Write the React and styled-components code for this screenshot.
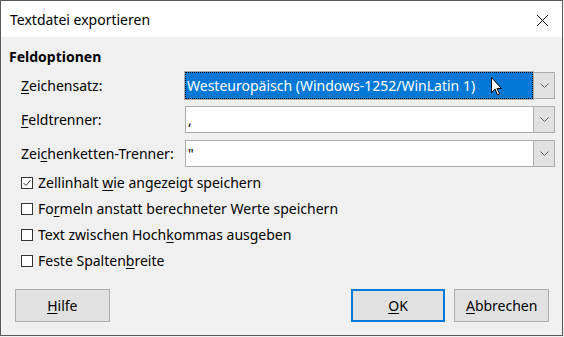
import React from "react";
import styled, { createGlobalStyle } from "styled-components";

const Global = createGlobalStyle`
  html, body { margin: 0; padding: 0; background: #f0f0f0; }
  #root { width: 564px; height: 337px; }
`;

const Window = styled.div`
  box-sizing: border-box;
  width: 563px;
  height: 336px;
  border: 1px solid #5a5a5a;
  background: #f0f0f0;
  display: flex;
  flex-direction: column;
  position: relative;
  font-family: "Noto Sans", sans-serif;
  font-size: 14px;
  line-height: 16px;
  color: #000;
`;

const TitleBar = styled.div`
  height: 36px;
  flex: none;
  background: #fff;
  display: flex;
  align-items: center;
  justify-content: space-between;
  padding: 0 13px 0 9px;
`;

const Title = styled.span`
  margin-top: 2px;
`;

const CloseBtn = styled.span`
  display: flex;
  width: 13px;
  height: 13px;
  margin-top: 2px;
`;

const Body = styled.div`
  flex: 1;
  display: flex;
  flex-direction: column;
  padding: 12px 13px 13px 8px;
`;

const SectionTitle = styled.div`
  font-weight: bold;
`;

const FieldGrid = styled.div`
  display: grid;
  grid-template-columns: 164px 370px;
  grid-auto-rows: 27px;
  row-gap: 7px;
  margin: 7px 0 0 12px;
  align-items: center;
`;

const Label = styled.span``;

const Combo = styled.div`
  display: flex;
  height: 27px;
  box-sizing: border-box;
`;

const Field = styled.div`
  flex: 1;
  box-sizing: border-box;
  border: 1px solid #adadad;
  border-right: none;
  background: #fff;
  display: flex;
  align-items: center;
  padding: 0 2px;
`;

const SelectedText = styled.div`
  flex: 1;
  align-self: stretch;
  box-sizing: border-box;
  background: #0078d7;
  color: #fff;
  border: 1px dotted #000;
  outline: 1px solid #adadad;
  display: flex;
  align-items: center;
  padding: 0 1px;
`;

const DropBtn = styled.div`
  width: 22px;
  flex: none;
  box-sizing: border-box;
  border: 1px solid #adadad;
  background: #e1e1e1;
  display: flex;
  align-items: center;
  justify-content: center;
`;

const CheckList = styled.div`
  display: flex;
  flex-direction: column;
  margin: 3px 0 0 12px;
`;

const CheckRow = styled.label`
  height: 26px;
  display: flex;
  align-items: center;
  gap: 5px;
`;

const Box = styled.span`
  width: 12px;
  height: 12px;
  box-sizing: border-box;
  border: 1px solid #333;
  background: #fff;
  display: flex;
  align-items: center;
  justify-content: center;
  flex: none;
`;

const ButtonRow = styled.div`
  margin-top: auto;
  display: flex;
  align-items: center;
  padding-left: 6px;
`;

const Button = styled.div`
  width: 95px;
  height: 33px;
  box-sizing: border-box;
  background: #e1e1e1;
  border: ${(p) => (p.$default ? "2px solid #0078d7" : "1px solid #adadad")};
  display: flex;
  align-items: center;
  justify-content: center;
  margin-left: ${(p) => p.$ml || 0}px;
`;

const U = styled.span`
  text-decoration: underline;
  text-underline-offset: 2px;
`;

const Cursor = styled.svg`
  position: absolute;
  left: 490px;
  top: 76px;
`;

const Chevron = () => (
  <svg width="9" height="5" viewBox="0 0 9 5">
    <path d="M0.5 0.5 L4.5 4.5 L8.5 0.5" fill="none" stroke="#606060" strokeWidth="1" />
  </svg>
);

export default function App() {
  return (
    <>
      <Global />
      <Window>
        <TitleBar>
          <Title>Textdatei exportieren</Title>
          <CloseBtn>
            <svg width="13" height="13" viewBox="0 0 13 13">
              <path d="M1 1 L12 12 M12 1 L1 12" stroke="#000" strokeWidth="1" />
            </svg>
          </CloseBtn>
        </TitleBar>
        <Body>
          <SectionTitle>Feldoptionen</SectionTitle>
          <FieldGrid>
            <Label><U>Z</U>eichensatz:</Label>
            <Combo>
              <SelectedText>Westeuropäisch (Windows-1252/WinLatin 1)</SelectedText>
              <DropBtn><Chevron /></DropBtn>
            </Combo>
            <Label><U>F</U>eldtrenner:</Label>
            <Combo>
              <Field>,</Field>
              <DropBtn><Chevron /></DropBtn>
            </Combo>
            <Label>Zei<U>c</U>henketten-Trenner:</Label>
            <Combo>
              <Field>"</Field>
              <DropBtn><Chevron /></DropBtn>
            </Combo>
          </FieldGrid>
          <CheckList>
            <CheckRow>
              <Box>
                <svg width="10" height="10" viewBox="0 0 10 10">
                  <path d="M1.5 5 L4 7.5 L8.5 2" fill="none" stroke="#333" strokeWidth="1" />
                </svg>
              </Box>
              <span>Zellinhalt <U>w</U>ie angezeigt speichern</span>
            </CheckRow>
            <CheckRow>
              <Box />
              <span>Fo<U>r</U>meln anstatt berechneter Werte speichern</span>
            </CheckRow>
            <CheckRow>
              <Box />
              <span>Text zwischen Hoch<U>k</U>ommas ausgeben</span>
            </CheckRow>
            <CheckRow>
              <Box />
              <span>Feste Spalten<U>b</U>reite</span>
            </CheckRow>
          </CheckList>
          <ButtonRow>
            <Button><span><U>H</U>ilfe</span></Button>
            <Button $default $ml={241}><span><U>O</U>K</span></Button>
            <Button $ml={9}><span><U>A</U>bbrechen</span></Button>
          </ButtonRow>
        </Body>
        <Cursor width="13" height="20" viewBox="0 0 13 20">
          <path d="M0.5 0.5 L0.5 15.5 L4 12 L6.5 18 L8.5 17 L6 11.5 L10.5 11.5 Z" fill="#fff" stroke="#000" strokeWidth="1" />
        </Cursor>
      </Window>
    </>
  );
}
